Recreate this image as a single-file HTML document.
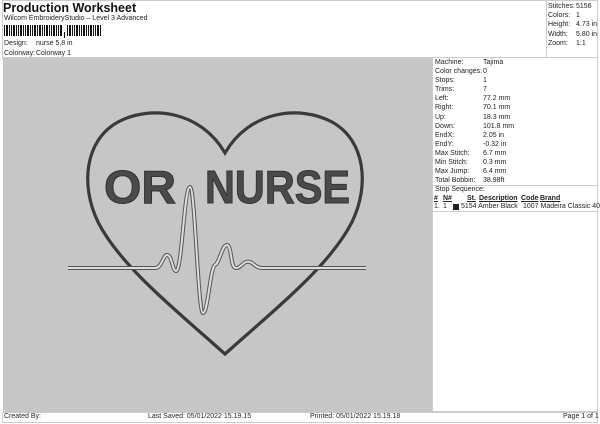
<!DOCTYPE html><html><head><style>
body{margin:0;width:600px;height:424px;background:#fff;font-family:"Liberation Sans",sans-serif;position:relative;overflow:hidden;color:#222}
.a{position:absolute;white-space:nowrap}
.s{font-size:7px}
</style></head><body>
<div class="a" style="left:3px;top:1px;font-size:12.5px;font-weight:bold;color:#111">Production Worksheet</div>
<div class="a s" style="left:4px;top:15px">Wilcom EmbroideryStudio – Level 3 Advanced</div>
<svg class="a" style="left:4px;top:25px" width="100" height="13">
<g fill="#111">
<rect x="0" y="0" width="1" height="11"/><rect x="2" y="0" width="2" height="11"/><rect x="5" y="0" width="1" height="11"/><rect x="7" y="0" width="1" height="11"/><rect x="9" y="0" width="2" height="11"/><rect x="12" y="0" width="1" height="11"/><rect x="14" y="0" width="1" height="11"/><rect x="16" y="0" width="2" height="11"/><rect x="19" y="0" width="1" height="11"/><rect x="21" y="0" width="1" height="11"/><rect x="23" y="0" width="2" height="11"/><rect x="26" y="0" width="1" height="11"/><rect x="28" y="0" width="1" height="11"/><rect x="30" y="0" width="2" height="11"/><rect x="33" y="0" width="1" height="11"/><rect x="35" y="0" width="2" height="11"/><rect x="38" y="0" width="1" height="11"/><rect x="40" y="0" width="1" height="11"/><rect x="42" y="0" width="2" height="11"/><rect x="45" y="0" width="1" height="11"/><rect x="47" y="0" width="1" height="11"/><rect x="49" y="0" width="2" height="11"/><rect x="52" y="0" width="1" height="11"/><rect x="54" y="0" width="1" height="11"/><rect x="56" y="0" width="2" height="11"/><rect x="60" y="7" width="1" height="6"/><rect x="63" y="0" width="1" height="11"/><rect x="65" y="0" width="2" height="11"/><rect x="68" y="0" width="1" height="11"/><rect x="70" y="0" width="1" height="11"/><rect x="72" y="0" width="2" height="11"/><rect x="75" y="0" width="1" height="11"/><rect x="77" y="0" width="1" height="11"/><rect x="79" y="0" width="2" height="11"/><rect x="82" y="0" width="1" height="11"/><rect x="84" y="0" width="1" height="11"/><rect x="86" y="0" width="2" height="11"/><rect x="89" y="0" width="1" height="11"/><rect x="91" y="0" width="1" height="11"/><rect x="93" y="0" width="2" height="11"/><rect x="96" y="0" width="1" height="11"/>
</g></svg>
<div class="a s" style="left:4px;top:40px">Design:</div><div class="a s" style="left:36px;top:40px">nurse 5,8 in</div>
<div class="a s" style="left:4px;top:50px">Colorway:</div><div class="a s" style="left:36px;top:50px">Colorway 1</div>
<div class="a" style="left:2px;top:0;width:596px;height:58px;border:1px solid #ccc;box-sizing:border-box"></div>
<div class="a" style="left:546px;top:0;width:52px;height:58px;border-left:1px solid #ccc"></div>
<div class="a s" style="left:548px;top:2px;line-height:9.2px">Stitches:<br>Colors:<br>Height:<br>Width:<br>Zoom:</div>
<div class="a s" style="left:576px;top:2px;line-height:9.2px">5156<br>1<br>4.73 in<br>5.80 in<br>1:1</div>
<div class="a" style="left:3px;top:58px;width:430px;height:354px;background:#c6c6c6"></div>
<svg class="a" style="left:0;top:0" width="433" height="412">
<path d="M225,153 C200,110 150,105 118,122 C85,140 80,185 98,222 C120,265 170,305 225,354 C280,305 330,265 352,222 C370,185 365,140 332,122 C300,105 250,110 225,153 Z" fill="none" stroke="#3a3a3a" stroke-width="3.2"/>
<g font-family="Liberation Sans,sans-serif" font-weight="bold" font-size="46" fill="#4a4a4a" stroke="#333" stroke-width="1">
<text x="104" y="203" textLength="72" lengthAdjust="spacingAndGlyphs">OR</text>
<text x="205" y="203" textLength="145" lengthAdjust="spacingAndGlyphs">NURSE</text></g>
<path d="M68,268 L155,268 C162,268 163,255 167,255 C172,255 172,270 176,271 C182,272 184,187 190,187 C195,187 198,313 203,313 C208,313 210,268 215,265 C220,262 222,245 227,245 C232,245 230,268 236,268 C242,268 243,260 250,262 C255,264 256,268 262,268 L366,268" fill="none" stroke="#555" stroke-width="4"/>
<path d="M68,268 L155,268 C162,268 163,255 167,255 C172,255 172,270 176,271 C182,272 184,187 190,187 C195,187 198,313 203,313 C208,313 210,268 215,265 C220,262 222,245 227,245 C232,245 230,268 236,268 C242,268 243,260 250,262 C255,264 256,268 262,268 L366,268" fill="none" stroke="#ddd" stroke-width="2"/>
</svg>
<div class="a" style="left:432px;top:57px;width:166px;height:355px;border:1px solid #ccc;box-sizing:border-box"></div>
<div class="a s" style="left:435px;top:58px;line-height:9.1px">Machine:<br>Color changes:<br>Stops:<br>Trims:<br>Left:<br>Right:<br>Up:<br>Down:<br>EndX:<br>EndY:<br>Max Stitch:<br>Min Stitch:<br>Max Jump:<br>Total Bobbin:</div>
<div class="a s" style="left:483px;top:58px;line-height:9.1px">Tajima<br>0<br>1<br>7<br>77.2 mm<br>70.1 mm<br>18.3 mm<br>101.8 mm<br>2.05 in<br>-0.32 in<br>6.7 mm<br>0.3 mm<br>6.4 mm<br>38.98ft</div>
<div class="a" style="left:432px;top:185px;width:166px;border-top:1px solid #ccc"></div>
<div class="a s" style="left:435px;top:186px">Stop Sequence:</div>
<div class="a s" style="left:434px;top:195px;font-weight:bold;text-decoration:underline">#</div>
<div class="a s" style="left:443px;top:195px;font-weight:bold;text-decoration:underline">N#</div>
<div class="a s" style="left:467px;top:195px;font-weight:bold;text-decoration:underline">St.</div>
<div class="a s" style="left:479px;top:195px;font-weight:bold;text-decoration:underline">Description</div>
<div class="a s" style="left:521px;top:195px;font-weight:bold;text-decoration:underline">Code</div>
<div class="a s" style="left:540px;top:195px;font-weight:bold;text-decoration:underline">Brand</div>
<div class="a s" style="left:434px;top:203px">1.</div><div class="a s" style="left:443px;top:203px">1</div>
<div class="a" style="left:453px;top:204px;width:6px;height:6px;background:#222"></div>
<div class="a s" style="left:461px;top:203px">5154 Amber Black</div>
<div class="a s" style="left:523px;top:203px">1007 Madeira Classic 40</div>
<div class="a" style="left:432px;top:211px;width:166px;border-top:1px solid #ccc"></div>
<div class="a" style="left:2px;top:412px;width:596px;height:11px;border:1px solid #ccc;box-sizing:border-box"></div>
<div class="a s" style="left:4px;top:413px">Created By:</div>
<div class="a s" style="left:148px;top:413px">Last Saved: 05/01/2022 15.19.15</div>
<div class="a s" style="left:310px;top:413px">Printed: 05/01/2022 15.19.18</div>
<div class="a s" style="left:563px;top:413px">Page 1 of 1</div>
</body></html>
